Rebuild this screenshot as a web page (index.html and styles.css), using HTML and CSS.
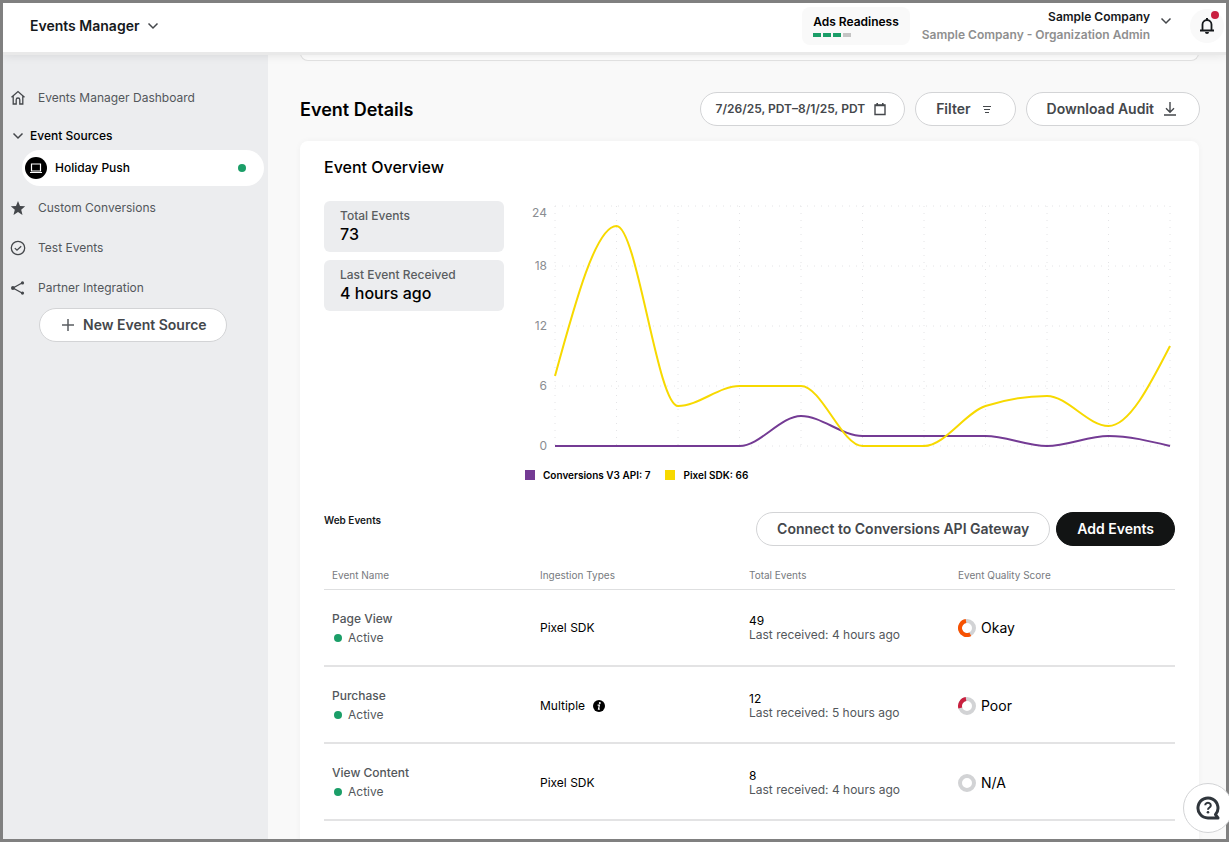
FILE: index.html
```html
<!DOCTYPE html>
<html lang="en">
<head>
    <meta charset="utf-8">
    <title>Events Manager</title>
    <link rel="stylesheet" href="styles.css">
</head>
<body>
    <header class="topbar">
        <button class="app-menu" type="button">
            Events Manager
            <svg class="chevron" width="12" height="12" viewBox="0 0 12 12"><path d="M1.500 3.500L6 8l4.500-4.500"/></svg>
        </button>
        <div class="topbar-right">
            <div class="readiness">
                <div>Ads Readiness</div>
                <div class="bars"><i class="on"></i><i class="on"></i><i class="on"></i><i></i></div>
            </div>
            <button class="account" type="button">
                <span class="account-text">
                    <span class="account-name">Sample Company</span>
                    <span class="account-role">Sample Company - Organization Admin</span>
                </span>
                <svg class="chevron" width="12" height="12" viewBox="0 0 12 12"><path d="M1.500 3.500L6 8l4.500-4.500"/></svg>
            </button>
            <button class="bell" type="button" aria-label="Notifications">
                <svg width="16" height="18" viewBox="0 0 16 18">
                    <path d="M3.500 13V7.500a4.500 4.500 0 0 1 9 0V13M1 13.500h14" fill="none" stroke="#16191c" stroke-width="1.800"/>
                    <path d="M8 1v2" stroke="#16191c" stroke-width="2"/>
                    <path d="M6 15h4a2 2 0 0 1-4 0z" fill="#16191c"/>
                </svg>
                <span class="badge"></span>
            </button>
        </div>
    </header>

    <div class="layout">
        <nav class="sidebar">
            <a class="nav-item" href="#">
                <svg width="16" height="16" viewBox="0 0 16 16"><path d="M1.500 7.200L8 1.600l6.500 5.600M3.200 6v8h3v-4.200a1.800 1.800 0 0 1 3.600 0V14h3V6" fill="none" stroke="#44474b" stroke-width="1.300"/></svg>
                Events Manager Dashboard
            </a>
            <a class="nav-group" href="#">
                <svg class="chevron" width="12" height="12" viewBox="0 0 12 12"><path d="M1.500 3.500L6 8l4.500-4.500"/></svg>
                Event Sources
            </a>
            <a class="nav-source" href="#">
                <svg width="22" height="22" viewBox="0 0 22 22">
                    <circle cx="11" cy="11" r="11" fill="#000"/>
                    <path d="M6.500 7h9v7h-9zM5 15.500h12" fill="none" stroke="#fff" stroke-width="1.200"/>
                </svg>
                <span class="source-name">Holiday Push</span>
                <span class="dot"></span>
            </a>
            <a class="nav-item" href="#">
                <svg width="16" height="16" viewBox="0 0 16 16"><path d="M8 1l2 4.900 5.200.4-4 3.400 1.300 5.200L8 12.100l-4.500 2.800 1.300-5.200-4-3.400L6 5.900z" fill="#44474b"/></svg>
                Custom Conversions
            </a>
            <a class="nav-item" href="#">
                <svg width="16" height="16" viewBox="0 0 16 16"><g fill="none" stroke="#44474b" stroke-width="1.300"><circle cx="8" cy="8" r="6.700"/><path d="M4.800 8.100l2.200 2.100 4.200-4"/></g></svg>
                Test Events
            </a>
            <a class="nav-item" href="#">
                <svg width="16" height="16" viewBox="0 0 16 16"><path d="M12.500 2.800L3 8l9.500 5.200" fill="none" stroke="#44474b" stroke-width="1.300"/><g fill="#44474b"><circle cx="12.500" cy="2.900" r="1.600"/><circle cx="2.900" cy="8" r="1.900"/><circle cx="12.500" cy="13.100" r="1.600"/></g></svg>
                Partner Integration
            </a>
            <button class="btn new-source" type="button">
                <svg width="12" height="12" viewBox="0 0 12 12"><path d="M6 0v12M0 6h12" stroke="#5a5d61" stroke-width="1.500"/></svg>
                New Event Source
            </button>
        </nav>

        <main class="main">
            <div class="card-end"></div>
            <div class="page-head">
                <h1>Event Details</h1>
                <div class="actions">
                    <button class="btn date" type="button">
                        7/26/25, PDT–8/1/25, PDT
                        <svg width="12" height="14" viewBox="0 0 12 14"><path d="M1 3h10v9.500H1z" fill="none" stroke="#44474b" stroke-width="1.400"/><path d="M1 3.500h10M3.200 1v2M8.800 1v2" stroke="#44474b" stroke-width="1.600"/></svg>
                    </button>
                    <button class="btn filter" type="button">
                        Filter
                        <svg width="10" height="10" viewBox="0 0 10 10"><path d="M1 2.500h8M2 5.500h6M3 8.500h4" stroke="#44474b" stroke-width="1"/></svg>
                    </button>
                    <button class="btn download" type="button">
                        Download Audit
                        <svg width="14" height="14" viewBox="0 0 14 14"><path d="M7 0v10M3 6.300l4 4 4-4M1 13h12" fill="none" stroke="#44474b" stroke-width="1.400"/></svg>
                    </button>
                </div>
            </div>

            <section class="card">
                <h2>Event Overview</h2>
                <div class="overview">
                    <div class="stats">
                        <div class="stat">
                            <div class="stat-label">Total Events</div>
                            <div class="stat-value">73</div>
                        </div>
                        <div class="stat">
                            <div class="stat-label">Last Event Received</div>
                            <div class="stat-value">4 hours ago</div>
                        </div>
                    </div>
                    <div class="chart">
                        <svg viewBox="0 0 651 255">
                            <g class="grid">
                                <path d="M31 5H646M31 65H646M31 125H646M31 185H646M31 245H646"/>
                                <path d="M31 5V245M92.500 5V245M154 5V245M215.500 5V245M277 5V245M338.500 5V245M400 5V245M461.500 5V245M523 5V245M584.500 5V245M646 5V245"/>
                            </g>
                            <g class="ticks">
                                <text x="23" y="16">24</text>
                                <text x="23" y="69">18</text>
                                <text x="23" y="129">12</text>
                                <text x="23" y="189">6</text>
                                <text x="23" y="249">0</text>
                            </g>
                            <path class="line api" d="M31 245H215.500C236 245 256.500 215 277 215S318 235 338.500 235H461.500C482 235 502.500 245 523 245S564 235 584.500 235S625.500 240 646 245"/>
                            <path class="line sdk" d="M31 175C51.500 100 72 25 92.500 25S133.500 205 154 205S195 185 215.500 185H277C297.500 185 318 245 338.500 245H400C420.500 245 441 211.700 461.500 205C482 198.300 502.500 195 523 195S564 225 584.500 225S625.500 185 646 145"/>
                        </svg>
                        <div class="legend">
                            <span><i class="api"></i>Conversions V3 API: 7</span>
                            <span><i class="sdk"></i>Pixel SDK: 66</span>
                        </div>
                    </div>
                </div>

                <div class="table-head">
                    <h3>Web Events</h3>
                    <div class="table-actions">
                        <button class="btn" type="button">Connect to Conversions API Gateway</button>
                        <button class="btn dark" type="button">Add Events</button>
                    </div>
                </div>

                <table class="events">
                    <thead>
                        <tr>
                            <th>Event Name</th>
                            <th>Ingestion Types</th>
                            <th>Total Events</th>
                            <th>Event Quality Score</th>
                        </tr>
                    </thead>
                    <tbody>
                        <tr>
                            <td><div class="name">Page View</div><div class="status"><span class="dot"></span>Active</div></td>
                            <td>Pixel SDK</td>
                            <td><div class="count">49</div><div class="last">Last received: 4 hours ago</div></td>
                            <td><div class="score">
                                <svg width="18" height="18" viewBox="0 0 18 18"><circle class="ring" cx="9" cy="9" r="7"/><path class="okay" d="M12.300 15.200A7 7 0 1 1 8 2.100"/></svg>Okay
                            </div></td>
                        </tr>
                        <tr>
                            <td><div class="name">Purchase</div><div class="status"><span class="dot"></span>Active</div></td>
                            <td><div class="multi">Multiple
                                <svg width="12" height="12" viewBox="0 0 12 12"><circle cx="6" cy="6" r="6" fill="#000"/><circle cx="6.800" cy="3" r="1" fill="#fff"/><path d="M4.600 5.200h1.800l-.9 4h1.300" fill="none" stroke="#fff" stroke-width="1.200"/></svg>
                            </div></td>
                            <td><div class="count">12</div><div class="last">Last received: 5 hours ago</div></td>
                            <td><div class="score">
                                <svg width="18" height="18" viewBox="0 0 18 18"><circle class="ring" cx="9" cy="9" r="7"/><path class="poor" d="M2.300 11A7 7 0 0 1 8 2.100"/></svg>Poor
                            </div></td>
                        </tr>
                        <tr>
                            <td><div class="name">View Content</div><div class="status"><span class="dot"></span>Active</div></td>
                            <td>Pixel SDK</td>
                            <td><div class="count">8</div><div class="last">Last received: 4 hours ago</div></td>
                            <td><div class="score">
                                <svg width="18" height="18" viewBox="0 0 18 18"><circle class="ring" cx="9" cy="9" r="7"/></svg>N/A
                            </div></td>
                        </tr>
                    </tbody>
                </table>
            </section>
        </main>
    </div>

    <button class="help" type="button" aria-label="Help">
        <svg width="24" height="24" viewBox="0 0 24 24">
            <path d="M19.500 18.600A10 10 0 1 0 12 22h10z" fill="none" stroke="#30363c" stroke-width="3" stroke-linejoin="round"/>
            <path d="M9.200 9.300a2.800 2.600 0 1 1 4.300 2.200c-1 .6-1.500 1-1.500 2.200" fill="none" stroke="#30363c" stroke-width="2"/>
            <circle cx="12" cy="16.300" r="1.300" fill="#30363c"/>
        </svg>
    </button>
</body>
</html>
```

FILE: styles.css
```css
* {
    box-sizing: border-box;
}
body {
    display: flex;
    flex-direction: column;
    height: 100vh;
    margin: 0;
    border: 3px solid #808080;
    overflow: hidden;
    background: #f9f9f9;
    color: #000;
    font-family: Inter, "Liberation Sans", sans-serif;
    font-size: 12px;
    line-height: 16px;
}
button {
    padding: 0;
    border: 0;
    background: none;
    color: inherit;
    font: inherit;
    cursor: pointer;
}
a {
    color: inherit;
    text-decoration: none;
}
h1, h2, h3 {
    margin: 0;
}
svg {
    flex: none;
}
.chevron {
    fill: none;
    stroke: #44474b;
    stroke-width: 1.5;
}
.dot {
    width: 8px;
    height: 8px;
    border-radius: 50%;
    background: #1b9e68;
}

/* top bar */
.topbar {
    position: relative;
    z-index: 1;
    display: flex;
    flex: none;
    align-items: center;
    justify-content: space-between;
    height: 49px;
    padding: 0 2px 3px 27px;
    background: #fff;
    box-shadow: 0 3px 0 #e9e9e9, 0 3px 10px rgba(0, 0, 0, 0.1);
}
.app-menu {
    display: flex;
    align-items: center;
    gap: 8px;
    color: #16191c;
    font-size: 14px;
    font-weight: 600;
}
.topbar-right {
    display: flex;
    align-items: center;
    gap: 12px;
}
.readiness {
    padding: 7px 11px 5px;
    border-radius: 8px;
    background: #f9f9f9;
    font-weight: 600;
}
.bars {
    display: flex;
    gap: 2px;
    padding: 3px 0;
}
.bars i {
    width: 8px;
    height: 4px;
    background: #c4c4c4;
}
.bars .on {
    background: #1b9e68;
}
.account {
    display: flex;
    gap: 10px;
    font-weight: 600;
    text-align: right;
}
.account .chevron {
    margin-top: 6px;
}
.account-text {
    display: flex;
    flex-direction: column;
    gap: 2px;
}
.account-name {
    color: #16191c;
}
.account-role {
    color: #8f8f8f;
}
.bell {
    position: relative;
    display: flex;
    align-items: center;
    justify-content: center;
    width: 34px;
    height: 34px;
    margin-left: 6px;
    border-radius: 50%;
    background: #f9f9f9;
}
.badge {
    position: absolute;
    top: 2px;
    right: 5px;
    width: 8px;
    height: 8px;
    border-radius: 50%;
    background: #c9203f;
}

.layout {
    display: flex;
    flex: 1;
    min-height: 0;
}

/* sidebar */
.sidebar {
    display: flex;
    flex: none;
    flex-direction: column;
    width: 265px;
    padding: 26px 4px 0 7px;
    background: #ecedef;
}
.nav-item {
    display: flex;
    align-items: center;
    gap: 12px;
    height: 40px;
    color: #53575b;
}
.nav-group {
    display: flex;
    align-items: center;
    gap: 6px;
    height: 32px;
    padding: 4px 0 0 2px;
    font-weight: 500;
}
.nav-source {
    display: flex;
    align-items: center;
    gap: 8px;
    height: 36px;
    margin: 0 0 2px 12px;
    padding: 0 18px 0 3px;
    border-radius: 18px;
    background: #fff;
    font-weight: 500;
}
.source-name {
    flex: 1;
}

.btn {
    display: flex;
    align-items: center;
    gap: 9px;
    height: 34px;
    padding: 0 20px;
    border: 1px solid #d3d4d6;
    border-radius: 17px;
    background: #fff;
    color: #44474b;
    font-size: 14px;
    font-weight: 600;
    white-space: nowrap;
}
.btn.dark {
    border-color: #121414;
    background: #121414;
    color: #fff;
}
.new-source {
    align-self: flex-start;
    margin-left: 29px;
    padding: 0 19px 0 22px;
}

/* main column */
.main {
    display: flex;
    flex: 1;
    flex-direction: column;
    min-width: 0;
    padding: 0 26px 0 32px;
    overflow: hidden;
}
.card-end {
    flex: none;
    height: 9px;
    margin-right: 1px;
    border: 1px solid #e3e3e3;
    border-top: 0;
    border-radius: 0 0 8px 8px;
    background: #fff;
}
.page-head {
    display: flex;
    flex: none;
    align-items: center;
    justify-content: space-between;
    padding: 31px 0 15px;
}
h1 {
    padding-top: 2px;
    font-size: 18px;
    font-weight: 600;
    line-height: 24px;
}
.actions {
    display: flex;
    gap: 10px;
}
.date {
    padding: 0 18px 0 15px;
    font-size: 12px;
}
.filter {
    gap: 11px;
    padding-right: 23px;
}
.download {
    padding-right: 22px;
}
.card {
    flex: 1 0 auto;
    margin-right: 1px;
    padding: 16px 24px 40px;
    border-radius: 8px;
    background: #fff;
    box-shadow: 0 0 6px rgba(0, 0, 0, 0.04);
}
h2 {
    font-size: 16px;
    font-weight: 500;
    line-height: 20px;
}
.overview {
    display: flex;
    gap: 20px;
    margin-top: 24px;
}
.stats {
    display: flex;
    flex: none;
    flex-direction: column;
    gap: 8px;
    width: 180px;
}
.stat {
    padding: 7px 16px 8px;
    border-radius: 6px;
    background: #ecedef;
}
.stat-label {
    color: #5a5d61;
    font-weight: 500;
}
.stat-value {
    font-size: 16px;
    font-weight: 500;
    line-height: 20px;
}
.chart {
    flex: 1;
    min-width: 0;
}
.chart svg {
    display: block;
    width: 100%;
}
.grid path {
    fill: none;
    stroke: #e4e4e6;
    stroke-dasharray: 1 6;
}
.ticks text {
    fill: #8a8d91;
    font-size: 12px;
    text-anchor: end;
}
.line {
    fill: none;
    stroke-width: 2;
}
.line.api {
    stroke: #743b94;
}
.line.sdk {
    stroke: #f7d900;
}
.legend {
    display: flex;
    gap: 15px;
    padding: 11px 1px;
    font-size: 10px;
    font-weight: 600;
}
.legend span {
    display: flex;
    align-items: center;
    gap: 8px;
}
.legend i {
    width: 10px;
    height: 10px;
}
.legend .api {
    background: #743b94;
}
.legend .sdk {
    background: #f7d900;
}

/* events table */
.table-head {
    display: flex;
    justify-content: space-between;
    margin-top: 18px;
}
h3 {
    color: #16191c;
    font-size: 10px;
    font-weight: 600;
}
.table-actions {
    display: flex;
    gap: 6px;
}
.events {
    width: 100%;
    margin-top: 15px;
    border-collapse: collapse;
    table-layout: fixed;
}
.events th {
    width: 209px;
    height: 28px;
    padding: 0 8px;
    border-bottom: 1px solid #dedfe0;
    color: #777a7e;
    font-size: 10px;
    font-weight: 400;
    text-align: left;
}
.events th:first-child {
    width: 208px;
}
.events th:last-child {
    width: auto;
}
.events td {
    height: 77px;
    padding: 2px 8px 0;
    border-bottom: 2px solid #e3e3e4;
}
.name {
    margin-bottom: 3px;
    color: #53575b;
    font-weight: 500;
}
.status {
    display: flex;
    align-items: center;
    gap: 6px;
    padding-left: 2px;
    color: #53575b;
}
.multi {
    display: flex;
    align-items: center;
    gap: 8px;
}
.count, .last {
    line-height: 14px;
}
.last {
    color: #53575b;
}
.score {
    display: flex;
    align-items: center;
    gap: 5px;
    font-size: 14px;
}
.score circle, .score path {
    fill: none;
    stroke-width: 4;
}
.ring {
    stroke: #d2d3d5;
}
.okay {
    stroke: #f75202;
}
.poor {
    stroke: #c9203f;
}

/* floating help button, partly past the right edge */
.help {
    position: absolute;
    right: -4px;
    bottom: 9px;
    display: flex;
    align-items: center;
    justify-content: center;
    width: 50px;
    height: 50px;
    border: 1px solid #d3d4d6;
    border-radius: 50%;
    background: #fff;
}
```
